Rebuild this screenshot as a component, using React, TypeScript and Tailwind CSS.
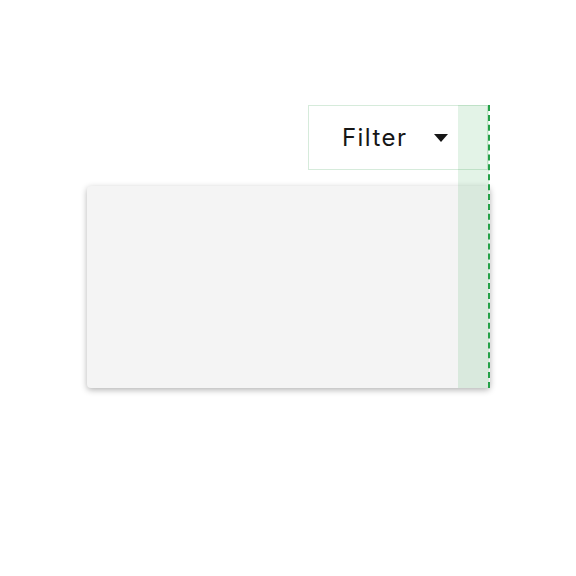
import * as React from 'react';

// --- Filter trigger + panel with highlighted edge ---
const CaretDown = () => (
    <svg width="14" height="8" viewBox="0 0 14 8" aria-hidden="true">
        <path d="M0 0h14L7 8z" fill="#161616" />
    </svg>
);

export default function App() {
    return (
        <div className="w-[576px] h-[576px] bg-white" style={{ fontFamily: 'Inter, "Noto Sans", sans-serif' }}>
            <div className="relative pt-[105px] pl-[87px] w-[490px]">
                <div className="flex flex-col items-end gap-[16px]">
                    <button className="w-[180px] h-[65px] mr-[2px] border border-[#d6ebdb] bg-white flex items-center pl-[33px] gap-[27px] text-[24px] text-[#161616] tracking-[0.06em]">
                        <span>Filter</span>
                        <CaretDown />
                    </button>
                    <div className="w-[403px] h-[202px] rounded-[4px] bg-[#f4f4f4] shadow-[0_2px_6px_rgba(0,0,0,0.3)]" />
                </div>

                {/* highlighted edge overlay */}
                <div className="absolute top-[105px] left-[458px] w-[31px] h-[283px] bg-[#24a148]/[0.13] pointer-events-none" />
                <div className="absolute top-[105px] left-[488px] h-[283px] border-l-2 border-dashed border-[#24a148] pointer-events-none" />
            </div>
        </div>
    );
}
